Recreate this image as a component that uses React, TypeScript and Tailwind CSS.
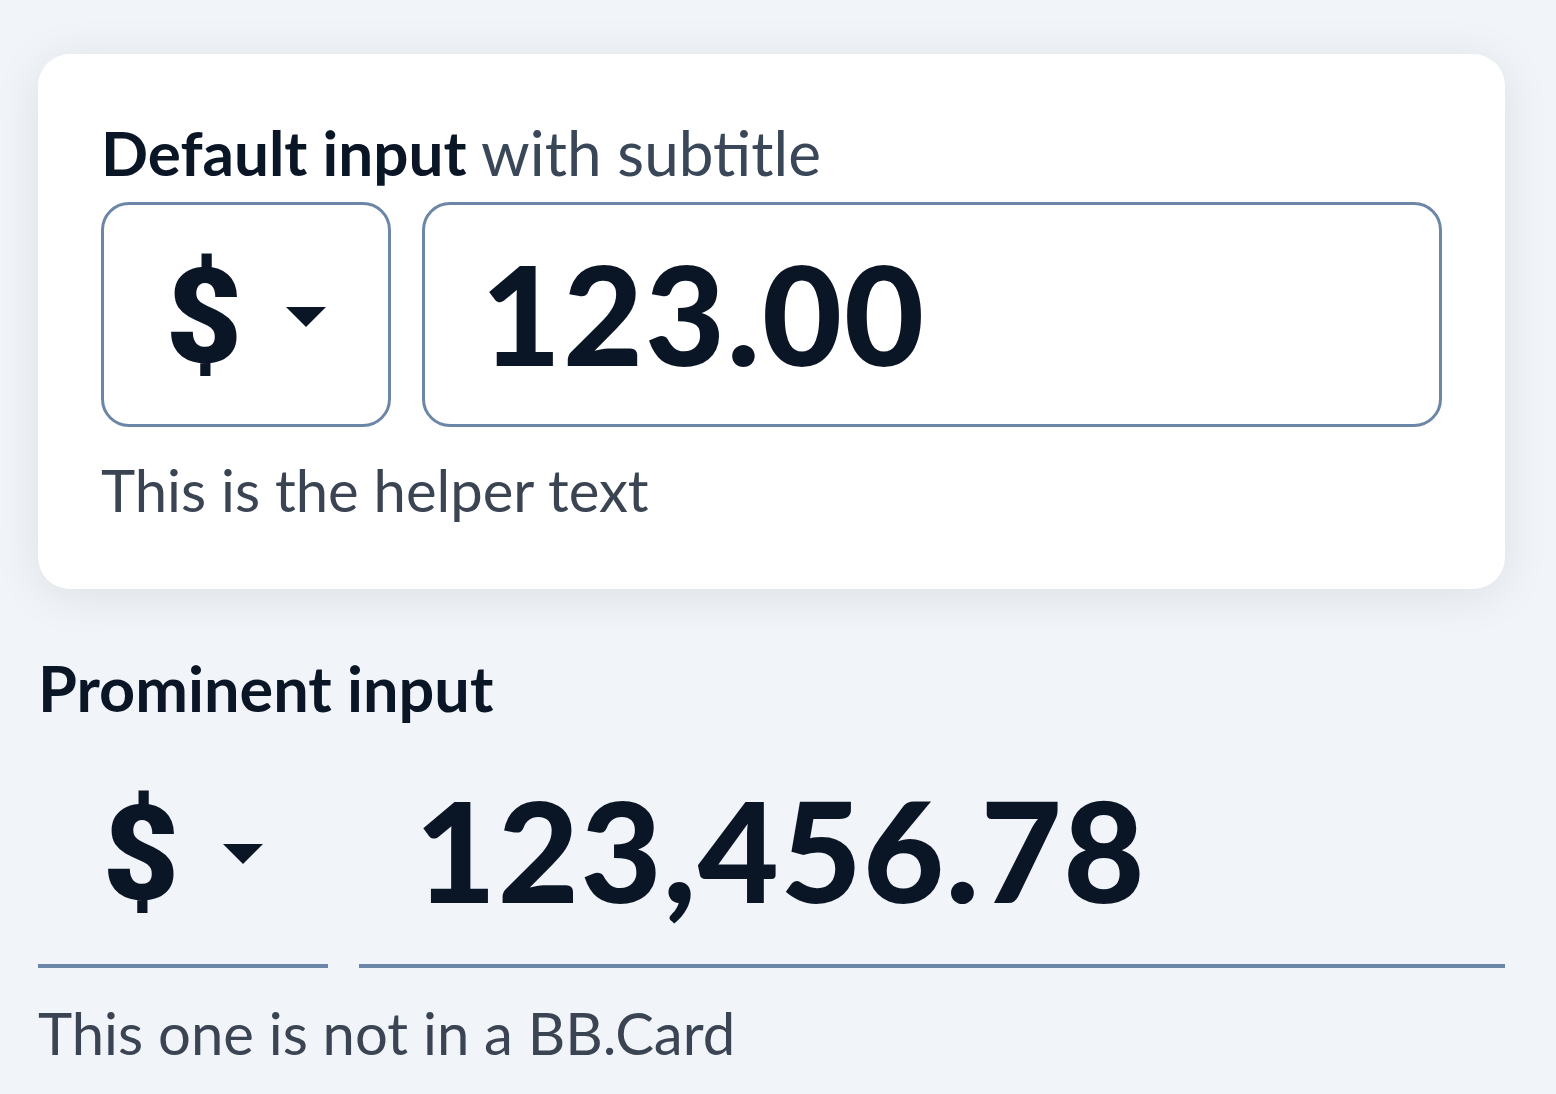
import React from 'react';

// Kleine driehoek onder de valuta-keuze
const Caret = () => (
  <svg width="40" height="20" viewBox="0 0 40 20" className="shrink-0">
    <path d="M0 0 L40 0 L20 20 Z" fill="#0a1526" />
  </svg>
);

const CurrencyPicker = () => (
  <div className="flex items-center justify-center gap-[44px]">
    <span
      className="text-[132px] font-black leading-none text-[#0a1526]"
      style={{ fontFamily: 'Roboto, sans-serif' }}
    >
      $
    </span>
    <Caret />
  </div>
);

export default function App() {
  return (
    <div
      className="min-h-screen bg-[#f1f4f8] px-[38px] pt-[54px] pb-10 text-[#0a1526]"
      style={{ fontFamily: 'Lato, "Noto Sans", sans-serif' }}
    >
      {/* Kaart met standaard invoer */}
      <div className="w-[1467px] rounded-[32px] bg-white px-[63px] pt-[67px] pb-[70px] shadow-[0_6px_48px_rgba(15,23,42,0.09)]">
        <h2 className="text-[62px] leading-none">
          <span className="font-bold">Default input</span>{' '}
          <span className="font-normal text-[#3a4759]">with subtitle</span>
        </h2>

        <div className="mt-[19px] flex gap-[31px]">
          <div className="flex h-[225px] w-[290px] items-center justify-center rounded-[28px] border-[3px] border-[#6c86a7] pt-[4px]">
            <CurrencyPicker />
          </div>
          <div className="flex h-[225px] flex-1 items-center rounded-[28px] border-[3px] border-[#6c86a7] pl-[56px] pb-[4px]">
            <span className="text-[138px] font-black leading-none tracking-[2px]">123.00</span>
          </div>
        </div>

        <p className="mt-[34px] text-[58px] leading-none text-[#3a4452]">This is the helper text</p>
      </div>

      {/* Prominente invoer, niet in een kaart */}
      <h2 className="mt-[67px] text-[63px] font-bold leading-none">Prominent input</h2>

      <div className="mt-[60px] flex w-[1467px] gap-[31px]">
        <div className="flex w-[290px] justify-center border-b-4 border-[#6c86a7] pb-[45px]">
          <div className="flex h-[140px] items-center pt-[10px]">
            <CurrencyPicker />
          </div>
        </div>
        <div className="flex flex-1 border-b-4 border-[#6c86a7] pl-[56px] pb-[45px]">
          <span className="text-[140px] font-black leading-none tracking-[1.5px]">123,456.78</span>
        </div>
      </div>

      <p className="mt-[36px] text-[58px] leading-none text-[#3a4452]">This one is not in a BB.Card</p>
    </div>
  );
}
